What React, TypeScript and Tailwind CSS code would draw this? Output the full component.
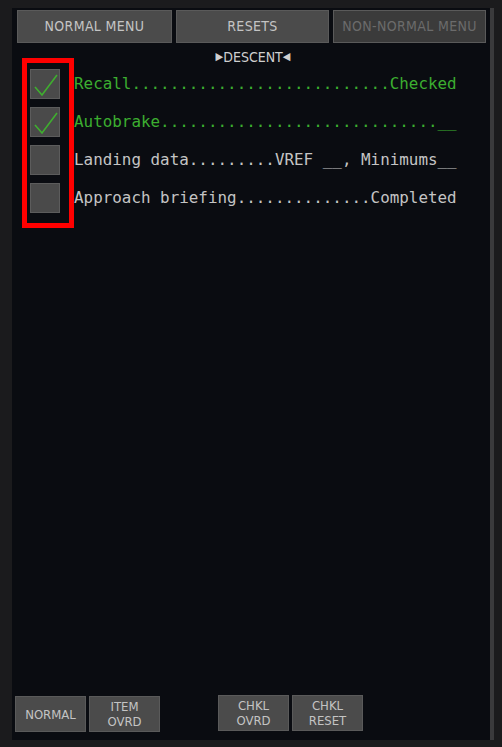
import React from "react";

const mono = { fontFamily: '"DejaVu Sans Mono", "Liberation Mono", monospace' };
const cond = { fontFamily: '"DejaVu Sans Condensed", "Liberation Sans Narrow", "DejaVu Sans", sans-serif' };

const items = [
  { left: "Recall", right: "Checked", done: true },
  { left: "Autobrake", right: "__", done: true },
  { left: "Landing data", right: "VREF __, Minimums__", done: false },
  { left: "Approach briefing", right: "Completed", done: false },
];

function line(left: string, right: string) {
  const n = 40 - left.length - right.length;
  return left + ".".repeat(Math.max(n, 0)) + right;
}

function Check() {
  return (
    <svg width="30" height="30" viewBox="0 0 30 30" className="block">
      <path d="M4 17 L11 25 L26 5" fill="none" stroke="#3fae2f" strokeWidth="1.6" />
    </svg>
  );
}

function TopButton({ label, w, dim }: { label: string; w: string; dim?: boolean }) {
  return (
    <div
      className={`${w} h-[33px] flex items-center justify-center border border-[#5a5a5a] text-[14px] tracking-wide ${
        dim ? "bg-[#3b3b3b] text-[#6b6b6b]" : "bg-[#4b4b4b] text-[#c4c4c4]"
      }`}
      style={cond}
    >
      {label}
    </div>
  );
}

function BottomButton({ lines }: { lines: string[] }) {
  return (
    <div
      className="w-[71px] h-[36px] flex flex-col items-center justify-center border border-[#5a5a5a] bg-[#4b4b4b] text-[#c4c4c4] text-[13px] leading-[15px]"
      style={cond}
    >
      {lines.map((l) => (
        <span key={l}>{l}</span>
      ))}
    </div>
  );
}

export default function App() {
  return (
    <div className="w-[502px] h-[747px] bg-[#1b1b1d] flex pl-[12px] pt-[8px] overflow-hidden">
      <div className="relative w-[478px] h-[732px] bg-[#0a0c11] flex flex-col">
        <div className="flex gap-[4px] pl-[5px] pt-[2px]">
          <TopButton label="NORMAL MENU" w="w-[155px]" />
          <TopButton label="RESETS" w="w-[153px]" />
          <TopButton label="NON-NORMAL MENU" w="w-[153px]" dim />
        </div>

        <div className="flex justify-center items-center h-[14px] mt-[7px] pl-[4px] text-[14px] text-[#cfcfcf]" style={cond}>
          <span className="text-[11px]">▶</span>
          <span>DESCENT</span>
          <span className="text-[11px]">◀</span>
        </div>

        <div className="flex flex-col gap-[8px] mt-[5px] pl-[18px]">
          {items.map((it) => (
            <div key={it.left} className="flex items-center h-[30px]">
              <div className="w-[30px] h-[30px] bg-[#4a4a4a] border border-[#5c5c5c]">
                {it.done && <Check />}
              </div>
              <span
                className={`ml-[14px] text-[15.9px] whitespace-pre ${it.done ? "text-[#3cae30]" : "text-[#c4c4c4]"}`}
                style={mono}
              >
                {line(it.left, it.right)}
              </span>
            </div>
          ))}
        </div>

        <div className="absolute left-[10px] top-[50px] w-[52px] h-[170px] border-[5px] border-[#ff0000]" />

        <div className="mt-auto mb-[8px] flex items-end pl-[3px]">
          <div className="flex gap-[3px]">
            <BottomButton lines={["NORMAL"]} />
            <BottomButton lines={["ITEM", "OVRD"]} />
          </div>
          <div className="flex gap-[3px] ml-[58px] mb-[1px]">
            <BottomButton lines={["CHKL", "OVRD"]} />
            <BottomButton lines={["CHKL", "RESET"]} />
          </div>
        </div>
      </div>
      <div className="w-[4px] h-[732px] bg-[#3a3a3c]" />
    </div>
  );
}
